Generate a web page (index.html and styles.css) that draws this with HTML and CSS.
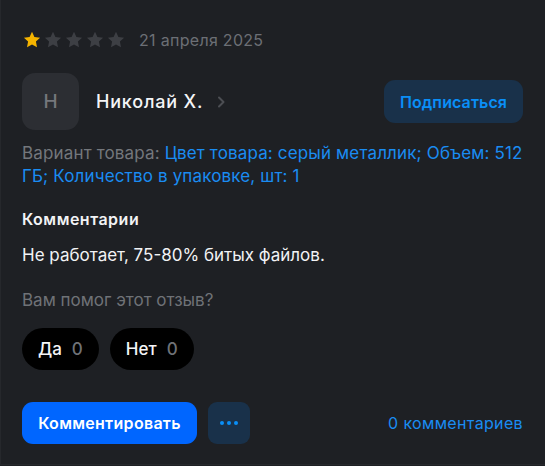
FILE: index.html
```html
<!DOCTYPE html>
<html lang="ru">
<head>
<meta charset="utf-8">
<link rel="stylesheet" href="styles.css">
</head>
<body>
<div class="review">
  <div class="meta">
    <div class="stars">
      <svg class="star on" viewBox="0 0 24 24"><path d="M12 2.2l2.9 6.2 6.8.8-5 4.7 1.3 6.7L12 17.3l-6 3.3 1.3-6.7-5-4.7 6.8-.8z"/></svg>
      <svg class="star" viewBox="0 0 24 24"><path d="M12 2.2l2.9 6.2 6.8.8-5 4.7 1.3 6.7L12 17.3l-6 3.3 1.3-6.7-5-4.7 6.8-.8z"/></svg>
      <svg class="star" viewBox="0 0 24 24"><path d="M12 2.2l2.9 6.2 6.8.8-5 4.7 1.3 6.7L12 17.3l-6 3.3 1.3-6.7-5-4.7 6.8-.8z"/></svg>
      <svg class="star" viewBox="0 0 24 24"><path d="M12 2.2l2.9 6.2 6.8.8-5 4.7 1.3 6.7L12 17.3l-6 3.3 1.3-6.7-5-4.7 6.8-.8z"/></svg>
      <svg class="star" viewBox="0 0 24 24"><path d="M12 2.2l2.9 6.2 6.8.8-5 4.7 1.3 6.7L12 17.3l-6 3.3 1.3-6.7-5-4.7 6.8-.8z"/></svg>
    </div>
    <span class="date">21 апреля 2025</span>
  </div>

  <div class="author">
    <div class="avatar">Н</div>
    <span class="name">Николай Х.</span>
    <svg class="chev" viewBox="0 0 10 14"><path d="M3 2.5l4.5 4.5L3 11.5" fill="none" stroke="currentColor" stroke-width="2" stroke-linecap="round" stroke-linejoin="round"/></svg>
    <button class="subscribe">Подписаться</button>
  </div>

  <p class="variant"><span class="label">Вариант товара:</span> <span class="value">Цвет товара: серый металлик; Объем: 512 ГБ; Количество в упаковке, шт: 1</span></p>

  <h3 class="section">Комментарии</h3>
  <p class="text">Не работает, 75-80% битых файлов.</p>

  <p class="helpful">Вам помог этот отзыв?</p>
  <div class="votes">
    <button class="vote">Да <span class="count">0</span></button>
    <button class="vote">Нет <span class="count">0</span></button>
  </div>

  <div class="actions">
    <button class="comment">Комментировать</button>
    <button class="more"><span></span><span></span><span></span></button>
    <a class="comments-link">0 комментариев</a>
  </div>
</div>
</body>
</html>
```

FILE: styles.css
```css
* { box-sizing: border-box; }
html, body { margin: 0; padding: 0; }
body {
  background: #1e2024;
  font-family: "Inter", "Noto Sans", sans-serif;
  color: #f2f3f5;
  width: 545px;
  height: 466px;
  overflow: hidden;
}
.review {
  height: 465px;
  border-left: 1px solid #26282c;
  border-bottom: 1px solid #26282c;
  padding: 30px 22px 0 21px;
}
.meta { display: flex; align-items: center; gap: 13px; height: 20px; }
.stars { display: flex; gap: 1px; }
.star { width: 20px; height: 20px; fill: #3d3f44; }
.star.on { fill: #f5b400; }
.date { color: #6c6f75; font-size: 16px; letter-spacing: 0.3px; }

.author { display: flex; align-items: center; margin-top: 23px; }
.avatar {
  width: 57px; height: 57px; border-radius: 13px;
  background: #2c2e33; color: #75777c;
  display: flex; align-items: center; justify-content: center;
  font-size: 19px; font-weight: 500;
}
.name { font-size: 18px; font-weight: 500; margin-left: 17px; color: #f4f5f7; letter-spacing: 0.8px; }
.chev { width: 10px; height: 14px; color: #4c4e53; margin-left: 13px; }
.subscribe {
  margin-left: auto;
  height: 43px; width: 139px;
  border: 0; border-radius: 11px;
  background: #19314a; color: #0a8ff7;
  font: 600 16px "Inter", "Noto Sans", sans-serif;
  letter-spacing: 0.1px;
}

.variant { margin: 12px 0 0; font-size: 17px; line-height: 23px; letter-spacing: 0.15px; }
.label { color: #74777c; }
.value { color: #1a8cf2; }

.section { margin: 20px 0 0; font-size: 16px; font-weight: 600; line-height: 22px; letter-spacing: 0.5px; }
.text { margin: 13px 0 0; font-size: 17px; line-height: 24px; }
.helpful { margin: 21px 0 0; font-size: 17px; color: #6f7277; line-height: 24px; }

.votes { display: flex; gap: 11px; margin-top: 16px; }
.vote {
  height: 42px; border: 0; border-radius: 21px;
  background: #000; color: #f4f5f7;
  padding: 0 16px; display: flex; align-items: center; gap: 10px;
  font: 500 17px "Inter", "Noto Sans", sans-serif;
}
.count { color: #6f7277; }

.actions { display: flex; align-items: center; gap: 11px; margin-top: 32px; }
.comment {
  height: 42px; width: 175px; border: 0; border-radius: 11px;
  background: #0066ff; color: #fff;
  font: 600 16px "Inter", "Noto Sans", sans-serif;
  letter-spacing: 0.3px;
}
.more {
  width: 42px; height: 42px; border: 0; border-radius: 9px;
  background: #19314a;
  display: flex; align-items: center; justify-content: center; gap: 3px;
}
.more span { width: 4px; height: 4px; border-radius: 50%; background: #0a8ff7; }
.comments-link { margin-left: auto; color: #1a8cf2; font-size: 16px; letter-spacing: 0.35px; }
```
